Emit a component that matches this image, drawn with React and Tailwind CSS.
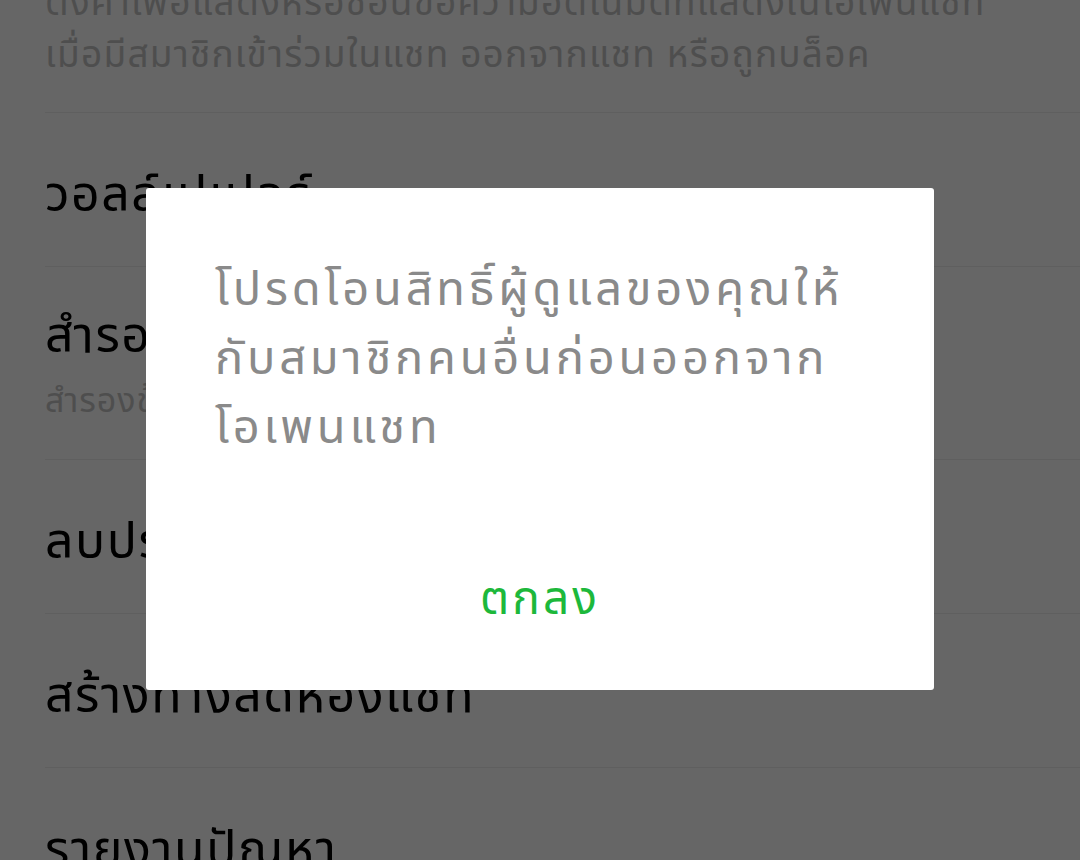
import React from 'react';

const thai = "font-['Noto_Sans_Thai','Noto_Sans',sans-serif]";

const Row = ({ title, sub, tall }) => (
  <div className={`${tall ? 'h-[193px] pt-[40px]' : 'h-[154px] pt-[53px]'} border-b border-[#ededed]`}>
    <p className="text-[50px] leading-[60px] tracking-[1.5px] text-black">{title}</p>
    {sub && <p className="mt-[13px] text-[34px] leading-[44px] tracking-[1px] text-[#c4c4c4]">{sub}</p>}
  </div>
);

const App = () => {
  return (
    <div className={`relative h-[860px] w-[1080px] overflow-hidden bg-white ${thai}`}>
      <div className="pl-[45px]">
        <div className="flex h-[113px] flex-col border-b border-[#ededed]">
          <p className="-mt-[22px] text-[37px] leading-[52px] tracking-[1.2px] text-[#c4c4c4]">
            ตั้งค่าเพื่อแสดงหรือซ่อนข้อความอัตโนมัติที่แสดงในโอเพนแชท
            <br />
            เมื่อมีสมาชิกเข้าร่วมในแชท ออกจากแชท หรือถูกบล็อค
          </p>
        </div>
        <Row title="วอลล์เปเปอร์" />
        <Row title="สำรองและคืนค่าประวัติแชท" sub="สำรองข้อมูลล่าสุด: ไม่มี" tall />
        <Row title="ลบประวัติแชท" />
        <Row title="สร้างทางลัดห้องแชท" />
        <Row title="รายงานปัญหา" />
      </div>

      <div className="absolute inset-0 bg-black/60" />

      <div className="absolute left-[146px] top-[188px] flex h-[502px] w-[788px] flex-col rounded-[3px] bg-white pl-[69px] pr-[40px] pt-[68px]">
        <p className="text-[47px] leading-[69px] tracking-[3.8px] text-[#8a8a8a]">
          โปรดโอนสิทธิ์ผู้ดูแลของคุณให้
          <br />
          กับสมาชิกคนอื่นก่อนออกจาก
          <br />
          โอเพนแชท
        </p>
        <button className="mt-auto mb-[60px] -ml-[29px] text-center text-[46px] leading-[60px] tracking-[3px] text-[#1db83b]">
          ตกลง
        </button>
      </div>
    </div>
  );
};

export default App;
